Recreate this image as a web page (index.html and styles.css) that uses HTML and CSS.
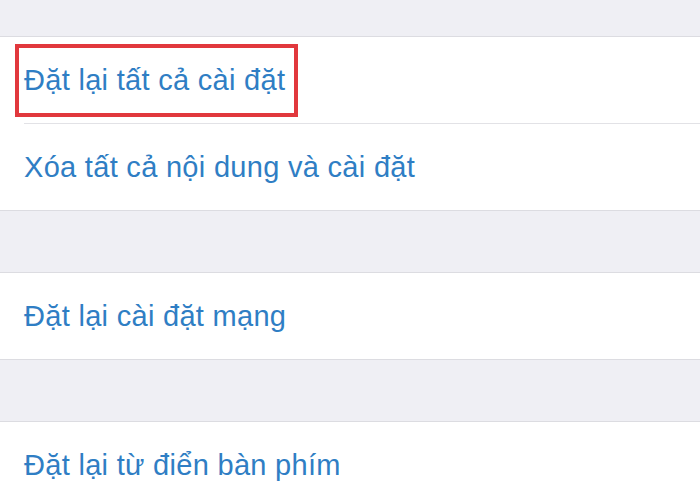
FILE: index.html
```html
<!DOCTYPE html>
<html lang="vi">
<head>
  <meta charset="UTF-8">
  <meta name="viewport" content="width=device-width, initial-scale=1.0">
  <title>Đặt lại</title>
  <link rel="stylesheet" href="styles.css">
</head>
<body>
  <div class="settings">
    <div class="spacer top"></div>

    <div class="group">
      <div class="row">
        <span class="label marked">Đặt lại tất cả cài đặt</span>
      </div>
      <div class="row">
        <span class="label">Xóa tất cả nội dung và cài đặt</span>
      </div>
    </div>

    <div class="spacer"></div>

    <div class="group">
      <div class="row">
        <span class="label">Đặt lại cài đặt mạng</span>
      </div>
    </div>

    <div class="spacer"></div>

    <div class="group">
      <div class="row">
        <span class="label">Đặt lại từ điển bàn phím</span>
      </div>
    </div>
  </div>
</body>
</html>
```

FILE: styles.css
```css
/* Reset screen styles */

body {
  margin: 0;
  padding: 0;
  background-color: #efeff4;
  font-family: "Liberation Sans", Arial, sans-serif;
  overflow: hidden;
}

.settings {
  display: flex;
  flex-direction: column;
}

.spacer {
  height: 61px;
}

.spacer.top {
  height: 36px;
}

.group {
  background-color: #fff;
  border-top: 1px solid #dcdce1;
  border-bottom: 1px solid #dcdce1;
}

.row {
  height: 86px;
  margin-left: 24px;
  display: flex;
  align-items: center;
}

.row + .row {
  border-top: 1px solid #e2e2e6;
}

.label {
  color: #2f7ec4;
  font-size: 29px;
  line-height: 34px;
  letter-spacing: 0.3px;
}

/* red highlight around the first option */
.marked {
  margin-left: -9px;
  padding: 15px 9px 16px 5px;
  border: 4px solid #e1383d;
}
```
